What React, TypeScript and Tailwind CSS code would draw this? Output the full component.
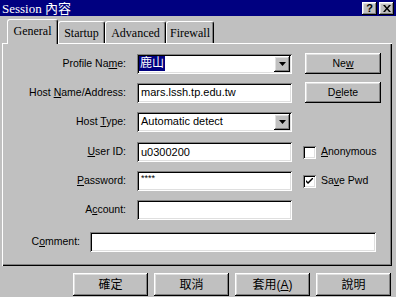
import React from "react";

const raised =
  "bg-[#c0c0c0] shadow-[inset_-1px_-1px_#000,inset_1px_1px_#fff,inset_-2px_-2px_#808080,inset_2px_2px_#dfdfdf]";
const sunken =
  "bg-white shadow-[inset_1px_1px_#808080,inset_-1px_-1px_#fff,inset_2px_2px_#000,inset_-2px_-2px_#dfdfdf]";

function Label({ pre, key1, post, w }: { pre: string; key1: string; post: string; w: string }) {
  return (
    <div className={`${w} shrink-0 text-right text-[10.5px] text-black`}>
      {pre}
      <u>{key1}</u>
      {post}
    </div>
  );
}

function Field({ children, w = "w-[155px]" }: { children?: React.ReactNode; w?: string }) {
  return (
    <div className={`${w} h-[20px] ${sunken} flex items-center pl-[4px] text-[11px] text-black`}>
      {children}
    </div>
  );
}

function Combo({ children }: { children?: React.ReactNode }) {
  return (
    <div className={`w-[155px] h-[20px] ${sunken} flex items-center pl-[2px] pr-[2px] text-[11px] text-black`}>
      <div className="flex-1 flex items-center">{children}</div>
      <div className={`w-[16px] h-[16px] ${raised} flex items-center justify-center`}>
        <svg width="7" height="4" viewBox="0 0 7 4">
          <path d="M0 0h7L3.5 4z" fill="#000" />
        </svg>
      </div>
    </div>
  );
}

function Button({ children, w = "w-[76px]", h = "h-[21px]" }: { children: React.ReactNode; w?: string; h?: string }) {
  return <div className={`${w} ${h} ${raised} flex items-center justify-center text-[10.5px] text-black`}>{children}</div>;
}

function Check({ checked }: { checked?: boolean }) {
  return (
    <div className={`w-[13px] h-[13px] ${sunken} flex items-center justify-center`}>
      {checked && (
        <svg width="7" height="7" viewBox="0 0 7 7">
          <path d="M0 2l2 2 5-5v2l-5 5-2-2z" fill="#000" />
        </svg>
      )}
    </div>
  );
}

function Tab({ label, w, active }: { label: string; w: string; active?: boolean }) {
  return (
    <div
      className={`${w} ${active ? "h-[25px] relative z-10 -mb-[1px] bg-[#c0c0c0]" : "h-[22px]"} shrink-0 rounded-t-[3px] border-l border-t border-r border-l-white border-t-white border-r-black shadow-[inset_-1px_0_#808080] flex justify-center pt-[2px] font-['Liberation_Serif',serif] text-[12px] text-black`}
    >
      {label}
    </div>
  );
}

export default function App() {
  return (
    <div className="w-[396px] h-[297px] overflow-hidden bg-[#c0c0c0] flex flex-col font-['Liberation_Sans','Noto_Sans_CJK_TC',sans-serif]">
      <div className="h-[16px] shrink-0 bg-[#000080] flex items-center pl-[2px] pr-[2px]">
        <span className="flex-1 text-white text-[13px] leading-none font-['Liberation_Serif','Noto_Sans_CJK_TC',serif]">
          Session 內容
        </span>
        <div className="flex gap-[2px]">
          <div className={`w-[15px] h-[13px] ${raised} flex items-center justify-center text-[11px] font-bold leading-none`}>?</div>
          <div className={`w-[15px] h-[13px] ${raised} flex items-center justify-center`}>
            <svg width="8" height="7" viewBox="0 0 8 7">
              <path d="M0 0h2l2 2.5L6 0h2L5 3.5 8 7H6L4 4.5 2 7H0l3-3.5z" fill="#000" />
            </svg>
          </div>
        </div>
      </div>

      <div className="h-[27px] shrink-0 flex items-end pl-[7px]">
        <Tab label="General" w="w-[51px]" active />
        <Tab label="Startup" w="w-[47px]" />
        <Tab label="Advanced" w="w-[61px]" />
        <Tab label="Firewall" w="w-[48px]" />
      </div>

      <div className="ml-[2px] w-[390px] h-[223px] shrink-0 shadow-[inset_1px_1px_#fff,inset_-1px_-1px_#000,inset_-2px_-2px_#808080] flex flex-col pt-[10px]">
        <div className="flex items-center h-[21px]">
          <Label w="w-[124px]" pre="Profile Na" key1="m" post="e:" />
          <div className="ml-[11px]">
            <Combo>
              <span className="bg-[#000080] text-white px-[1px] text-[12px] leading-[15px]">鹿山</span>
            </Combo>
          </div>
          <div className="ml-[13px]">
            <Button>
              Ne<u>w</u>
            </Button>
          </div>
        </div>

        <div className="flex items-center h-[21px] mt-[8px]">
          <Label w="w-[124px]" pre="Host " key1="N" post="ame/Address:" />
          <div className="ml-[11px]">
            <Field>mars.lssh.tp.edu.tw</Field>
          </div>
          <div className="ml-[13px]">
            <Button>
              D<u>e</u>lete
            </Button>
          </div>
        </div>

        <div className="flex items-center h-[21px] mt-[8px]">
          <Label w="w-[124px]" pre="Host " key1="T" post="ype:" />
          <div className="ml-[11px]">
            <Combo>
              <span className="pl-[2px]">Automatic detect</span>
            </Combo>
          </div>
        </div>

        <div className="flex items-center h-[20px] mt-[10px]">
          <Label w="w-[124px]" pre="" key1="U" post="ser ID:" />
          <div className="ml-[11px]">
            <Field>u0300200</Field>
          </div>
          <div className="ml-[11px] flex items-center gap-[5px] text-[10.5px] text-black">
            <Check />
            <span>
              <u>A</u>nonymous
            </span>
          </div>
        </div>

        <div className="flex items-center h-[20px] mt-[9px]">
          <Label w="w-[124px]" pre="" key1="P" post="assword:" />
          <div className="ml-[11px]">
            <Field>
              <span className="text-[9px] leading-none -mt-[5px]">****</span>
            </Field>
          </div>
          <div className="ml-[11px] flex items-center gap-[5px] text-[10.5px] text-black">
            <Check checked />
            <span>
              Sa<u>v</u>e Pwd
            </span>
          </div>
        </div>

        <div className="flex items-center h-[20px] mt-[9px]">
          <Label w="w-[124px]" pre="A" key1="c" post="count:" />
          <div className="ml-[11px]">
            <Field />
          </div>
        </div>

        <div className="flex items-center h-[20px] mt-[12px]">
          <Label w="w-[78px]" pre="C" key1="o" post="mment:" />
          <div className="ml-[10px]">
            <Field w="w-[286px]" />
          </div>
        </div>
      </div>

      <div className="flex gap-[6px] pl-[73px] mt-[7px]">
        <Button w="w-[75px]" h="h-[23px]">
          <span className="text-[12px]">確定</span>
        </Button>
        <Button w="w-[75px]" h="h-[23px]">
          <span className="text-[12px]">取消</span>
        </Button>
        <Button w="w-[75px]" h="h-[23px]">
          <span className="text-[12px]">
            套用(<u>A</u>)
          </span>
        </Button>
        <Button w="w-[75px]" h="h-[23px]">
          <span className="text-[12px]">說明</span>
        </Button>
      </div>
    </div>
  );
}
